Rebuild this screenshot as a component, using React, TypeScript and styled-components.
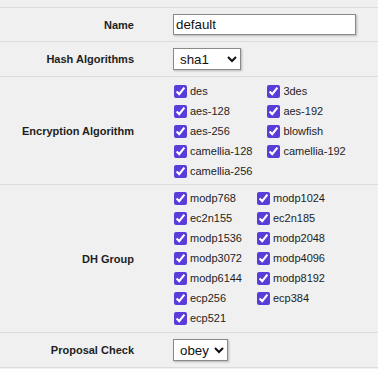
import React from 'react';
import styled, { createGlobalStyle } from 'styled-components';

const GlobalStyle = createGlobalStyle`
  html, body {
    margin: 0;
    padding: 0;
    background: #f0f0f0;
  }
  body {
    font-family: 'Liberation Sans', Arial, sans-serif;
  }
`;

const Page = styled.div`
  padding-top: 7px;
`;

const Form = styled.div`
  display: grid;
  grid-template-columns: 146px 1fr;
  border-top: 1px solid #dcdcdc;
`;

const Label = styled.div`
  display: flex;
  align-items: center;
  justify-content: flex-end;
  padding-right: 12px;
  font-size: 11px;
  font-weight: 700;
  color: #1e1e1e;
  border-bottom: 1px solid #dcdcdc;
`;

const Field = styled.div<{ $pad?: string }>`
  display: flex;
  align-items: center;
  padding: ${p => p.$pad || '6px 0 6px 27px'};
  border-bottom: 1px solid #dcdcdc;
`;

const TextInput = styled.input`
  width: 183px;
  height: 21px;
  box-sizing: border-box;
  margin: 0;
  padding: 0 2px;
  border: 1px solid #8a8a8a;
  border-radius: 0;
  background: #fff;
  box-shadow: 1px 1px 2px rgba(0, 0, 0, 0.25);
  font-family: 'Liberation Sans', Arial, sans-serif;
  font-size: 13.33px;
  color: #111;
  outline: none;
`;

const Select = styled.select<{ $w: number }>`
  width: ${p => p.$w}px;
  height: 22px;
  box-sizing: border-box;
  margin: 0;
  padding: 0 2px;
  border: 1px solid #8a8a8a;
  border-radius: 0;
  background: #fff;
  box-shadow: 1px 1px 2px rgba(0, 0, 0, 0.25);
  font-family: 'Liberation Sans', Arial, sans-serif;
  font-size: 13.33px;
  color: #111;
`;

const CheckGrid = styled.div`
  display: grid;
  grid-template-columns: auto auto;
  grid-auto-rows: 20px;
  column-gap: 11px;
  justify-content: start;
`;

const CheckItem = styled.label`
  display: flex;
  align-items: center;
  font-size: 11px;
  color: #1e1e1e;
  white-space: nowrap;
`;

const Box = styled.input`
  width: 13px;
  height: 13px;
  margin: 0 3px 0 4px;
  accent-color: #5a3dd8;
`;

const encryption = [
  'des', '3des', 'aes-128', 'aes-192', 'aes-256', 'blowfish',
  'camellia-128', 'camellia-192', 'camellia-256',
];

const dhGroups = [
  'modp768', 'modp1024', 'ec2n155', 'ec2n185', 'modp1536', 'modp2048',
  'modp3072', 'modp4096', 'modp6144', 'modp8192', 'ecp256', 'ecp384', 'ecp521',
];

const Checks = ({ items }: { items: string[] }) => (
  <CheckGrid>
    {items.map(name => (
      <CheckItem key={name}>
        <Box type="checkbox" defaultChecked />
        {name}
      </CheckItem>
    ))}
  </CheckGrid>
);

export default function App() {
  return (
    <Page>
      <GlobalStyle />
      <Form>
        <Label>Name</Label>
        <Field>
          <TextInput defaultValue="default" />
        </Field>

        <Label>Hash Algorithms</Label>
        <Field>
          <Select $w={68} defaultValue="sha1">
            <option>md5</option>
            <option>sha1</option>
            <option>sha256</option>
          </Select>
        </Field>

        <Label>Encryption Algorithm</Label>
        <Field $pad="4px 0 3px 24px">
          <Checks items={encryption} />
        </Field>

        <Label>DH Group</Label>
        <Field $pad="3px 0 4px 24px">
          <Checks items={dhGroups} />
        </Field>

        <Label>Proposal Check</Label>
        <Field>
          <Select $w={55} defaultValue="obey">
            <option>obey</option>
            <option>strict</option>
            <option>claim</option>
            <option>exact</option>
          </Select>
        </Field>
      </Form>
    </Page>
  );
}
